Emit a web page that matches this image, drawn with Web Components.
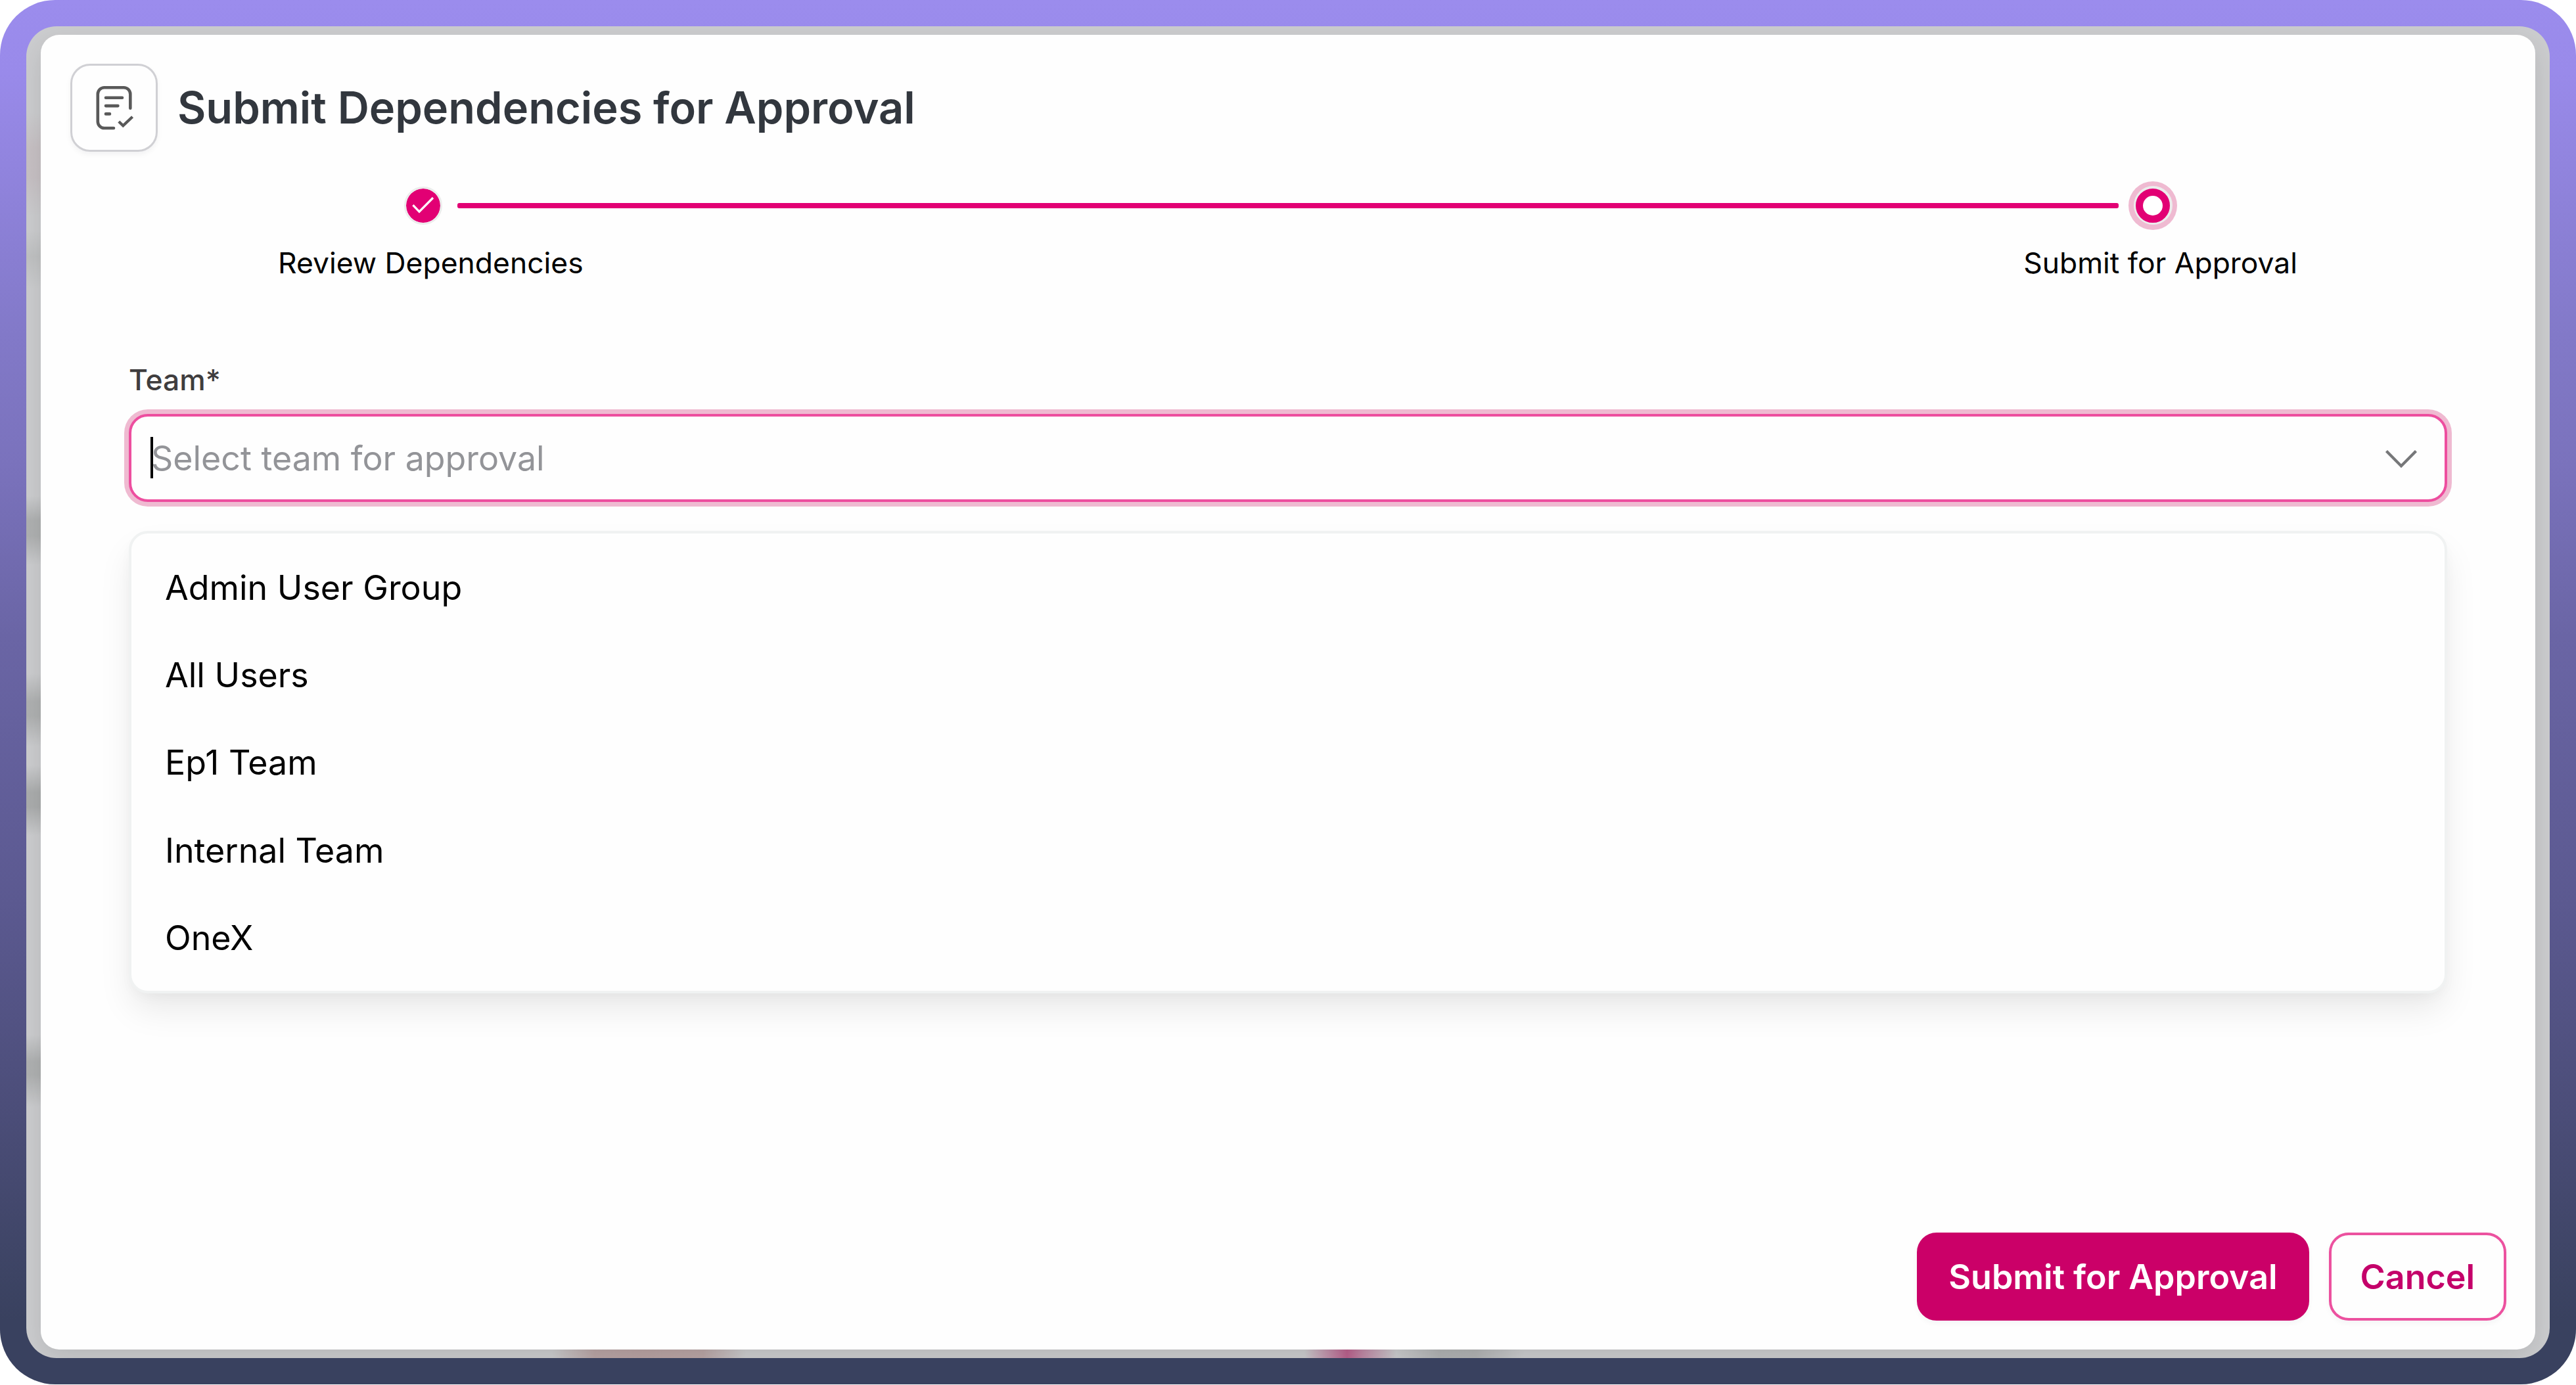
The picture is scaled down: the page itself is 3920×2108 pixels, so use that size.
<!DOCTYPE html>
<html lang="en">
<head>
<meta charset="utf-8">
<title>Submit Dependencies for Approval</title>
<style>
html, body { margin: 0; width: 3920px; height: 2108px; overflow: hidden; background: #fff; font-family: Inter, "Liberation Sans", sans-serif; }
</style>
</head>
<body>
<page-frame>
  <approval-dialog>
    <dialog-heading slot="header">Submit Dependencies for Approval</dialog-heading>
    <step-progress slot="header">
      <span slot="first">Review Dependencies</span>
      <span slot="second">Submit for Approval</span>
    </step-progress>
    <team-select label="Team*" placeholder="Select team for approval">
      <team-option>Admin User Group</team-option>
      <team-option>All Users</team-option>
      <team-option>Ep1 Team</team-option>
      <team-option>Internal Team</team-option>
      <team-option>OneX</team-option>
    </team-select>
    <action-button slot="footer" variant="primary">Submit for Approval</action-button>
    <action-button slot="footer">Cancel</action-button>
  </approval-dialog>
</page-frame>
<script>
function define(name, html) {
  const template = document.createElement('template');
  template.innerHTML = html;
  customElements.define(name, class extends HTMLElement {
    constructor() {
      super();
      this.attachShadow({ mode: 'open' }).append(template.content.cloneNode(true));
    }
    connectedCallback() {
      this.shadowRoot.querySelectorAll('[data-attr]').forEach(el => {
        el.textContent = this.getAttribute(el.dataset.attr) || '';
      });
    }
  });
}

define('page-frame', `
<style>
:host { display: flex; box-sizing: border-box; width: 3920px; height: 2107.3px; padding: 40px; border-radius: 84px;
  background: linear-gradient(180deg, #9b8ced 0, #998aea 110px, #8279c8 510px, #7a72bc 710px, #6a65a5 970px, #5b5990 1380px, #4b4d78 1700px, #3d4464 1940px, #39415f 2010px, #39415f 100%); }
.backdrop { display: flex; flex: 1; box-sizing: border-box; padding: 13px 22px 13.3px; border-radius: 46px; overflow: hidden;
  background:
    linear-gradient(180deg, #c5bbbf00 130px, #c5bbbfaa 185px, #c5bbbfaa 230px, #c5bbbf00 290px) 0 0 / 22px 100% no-repeat,
    linear-gradient(180deg, #b8baba00 310px, #b8baba99 350px, #b8baba00 400px) 0 0 / 22px 100% no-repeat,
    linear-gradient(180deg, #a8aaaa00 715px, #a8aaaacc 752px, #a8aaaacc 776px, #a8aaaa00 820px) 0 0 / 22px 100% no-repeat,
    linear-gradient(180deg, #a8aaaa00 985px, #a8aaaacc 1028px, #a8aaaacc 1050px, #a8aaaa00 1096px) 0 0 / 22px 100% no-repeat,
    linear-gradient(180deg, #a6a8a800 1125px, #a6a8a8dd 1166px, #a6a8a8dd 1188px, #a6a8a800 1232px) 0 0 / 22px 100% no-repeat,
    linear-gradient(180deg, #a8aaaa00 1535px, #a8aaaacc 1576px, #a8aaaacc 1596px, #a8aaaa00 1645px) 0 0 / 22px 100% no-repeat,
    linear-gradient(90deg, #b9a3a300 800px, #b9a3a3ee 865px, #b9a3a3 940px, #b9a3a3ee 1030px, #b9a3a300 1095px) 0 100% / 100% 14px no-repeat,
    linear-gradient(90deg, #b9628c00 1945px, #bb6a93aa 1985px, #bb618d 2010px, #bb6a93aa 2035px, #b9628c00 2085px) 0 100% / 100% 14px no-repeat,
    linear-gradient(90deg, #a3a5a500 2085px, #a8aaaabb 2150px, #a8aaaabb 2205px, #a3a5a500 2280px) 0 100% / 100% 14px no-repeat,
    #cccdcf; }
</style>
<div class="backdrop"><slot></slot></div>`);

define('approval-dialog', `
<style>
:host { display: flex; flex: 1; flex-direction: column; box-sizing: border-box; padding: 44px; border-radius: 28px; background: #fefefe;
  box-shadow: 0 14px 44px rgba(0,0,0,.11); }
.body { flex: 1; padding: 117px 90px 0 90px; }
.footer { display: flex; justify-content: flex-end; gap: 30px; }
</style>
<slot name="header"></slot>
<div class="body"><slot></slot></div>
<div class="footer"><slot name="footer"></slot></div>`);

define('dialog-heading', `
<style>
:host { display: flex; align-items: center; gap: 30px; height: 134px; margin-left: 1px; color: #32373e; }
.tile { display: flex; box-sizing: border-box; width: 133px; height: 134px; border: 3px solid #d0d0d4; border-radius: 30px;
  box-shadow: 0 4px 8px rgba(16,24,40,.05); }
svg { margin: -3px; flex: none; }
h1 { margin: 0; font-size: 66.69px; line-height: 80px; font-weight: 600; white-space: nowrap; }
</style>
<div class="tile">
  <svg width="133" height="134" viewBox="0 0 133 134" fill="none" stroke="#595959" stroke-width="4.6" stroke-linecap="round" stroke-linejoin="round">
    <path d="M91.3 67.8V46.2a10 10 0 0 0-10-10H51.8a10 10 0 0 0-10 10V88a10 10 0 0 0 10 10H66"/>
    <path d="M54 51.8H79M54 64.1H72.4M54 76.4H60"/>
    <path d="M73.8 88L80.3 94.3L94.6 80.8" stroke-width="4.3" stroke-linecap="butt" stroke-linejoin="miter"/>
  </svg>
</div>
<h1><slot></slot></h1>`);

define('step-progress', `
<style>
:host { display: block; margin-top: 44px; font-size: 44.42px; line-height: 60px; color: #000; white-space: nowrap; }
.track { display: flex; align-items: center; height: 75px; padding: 0 501px 0 509px; }
.dot { flex: none; box-sizing: border-box; border-radius: 50%; }
.done { width: 58px; height: 58px; border: 3px solid #ececec; background: #e20074; background-clip: padding-box; }
.done svg { display: block; }
.line { flex: 1; height: 8px; margin: 0 15px 0 23px; border-radius: 3px; background: #e20074; }
.current { width: 74px; height: 74px; padding: 7.5px; background: #efbad1; }
.halo { box-sizing: border-box; width: 59px; height: 59px; padding: 3.5px; border-radius: 50%; background: #ececec; }
.ring { box-sizing: border-box; width: 52px; height: 52px; border: 11px solid #e20074; border-radius: 50%; background: #fff; }
.labels { display: flex; justify-content: space-between; margin-top: 20px; padding: 0 318px 0 317px; }
</style>
<div class="track">
  <div class="dot done"><svg width="52" height="52" viewBox="0 0 52 52" fill="none" stroke="#fff" stroke-width="3.2"><path d="M10.4 25.2L20 35.2L41 14"/></svg></div>
  <div class="line"></div>
  <div class="dot current"><div class="halo"><div class="ring"></div></div></div>
</div>
<div class="labels"><slot name="first"></slot><slot name="second"></slot></div>`);

define('team-select', `
<style>
:host { display: block; }
.label { display: block; padding-top: 1px; font-size: 44.42px; line-height: 60px; font-weight: 500; color: #3f3d3e; }
.field { position: relative; display: flex; align-items: center; justify-content: space-between; box-sizing: border-box; height: 134px;
  margin-top: 22px; padding: 0 41px 0 30px; border: 4px solid #ed4e9f; border-radius: 29px; background: #fefefe; box-shadow: 0 0 0 7px #efbad1; }
.placeholder { padding-top: 2px; font-size: 51.87px; line-height: 64px; color: #939498; white-space: nowrap; }
.caret { position: absolute; left: 28.5px; top: 31px; width: 4px; height: 63px; background: #000; }
.field svg { padding-top: 3px; }
.menu { box-sizing: border-box; height: 704px; margin-top: 44px; padding: 16px 0 14px; border: 4px solid #f0f2f2; border-radius: 29px; background: #fefefe;
  box-shadow: 0 28px 52px -4px rgba(0,0,0,.085), 0 8px 24px -8px rgba(0,0,0,.05); background-clip: padding-box; }
</style>
<span class="label" data-attr="label"></span>
<div class="field">
  <span class="placeholder" data-attr="placeholder"></span>
  <span class="caret"></span>
  <svg width="50" height="30" viewBox="0 0 50 30" fill="none" stroke="#767779" stroke-width="4.3"><path d="M2.5 2.5L25 25.3L47.5 2.5"/></svg>
</div>
<div class="menu"><slot></slot></div>`);

define('team-option', `
<style>
:host { display: flex; align-items: center; height: 133.4px; padding-left: 51px; font-size: 51.9px; line-height: 64px; color: #000; white-space: nowrap; }
</style>
<slot></slot>`);

define('action-button', `
<style>
:host { display: flex; }
button { box-sizing: border-box; height: 134px; padding: 1px 44px 0; border: 4px solid #ec519f; border-radius: 30px; background: #fefefe; color: #c4006a;
  font: 600 51.95px/64px Inter, "Liberation Sans", sans-serif; white-space: nowrap; box-shadow: 0 4px 8px rgba(16,24,40,.04); }
:host([variant="primary"]) button { border-color: #cb0068; background: #cb0068; color: #fff; }
</style>
<button type="button"><slot></slot></button>`);
</script>
</body>
</html>
